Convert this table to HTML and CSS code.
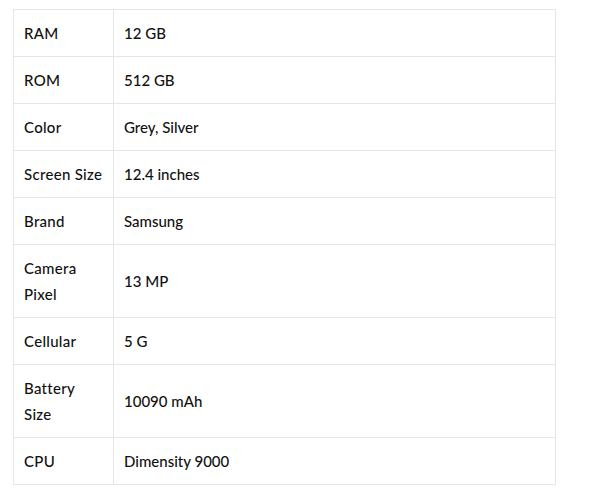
FILE: index.html
```html
<!DOCTYPE html>
<html>
<head>
<meta charset="utf-8">
<link rel="stylesheet" href="styles.css">
</head>
<body>
<div class="wrap">
<table class="specs">
<tr><td class="k">RAM</td><td class="v">12 GB</td></tr>
<tr><td class="k">ROM</td><td class="v">512 GB</td></tr>
<tr><td class="k">Color</td><td class="v">Grey, Silver</td></tr>
<tr><td class="k">Screen Size</td><td class="v">12.4 inches</td></tr>
<tr><td class="k">Brand</td><td class="v">Samsung</td></tr>
<tr><td class="k">Camera Pixel</td><td class="v">13 MP</td></tr>
<tr><td class="k">Cellular</td><td class="v">5 G</td></tr>
<tr><td class="k">Battery Size</td><td class="v">10090 mAh</td></tr>
<tr><td class="k">CPU</td><td class="v">Dimensity 9000</td></tr>
</table>
</div>
</body>
</html>
```
FILE: styles.css
```css
html, body { margin: 0; padding: 0; background: #fff; }
.wrap { padding: 9px 0 0 13px; }
.specs {
  border-collapse: collapse;
  width: 543px;
  font-family: "Lato", sans-serif;
  font-size: 15px;
  font-weight: 500;
  color: #111;
  line-height: 26px;
}
.specs td {
  border: 1px solid #e6e6e6;
  padding: 10px 10px;
  vertical-align: middle;
  text-align: left;
}
.specs .k { width: 79px; letter-spacing: 0.3px; }
```
